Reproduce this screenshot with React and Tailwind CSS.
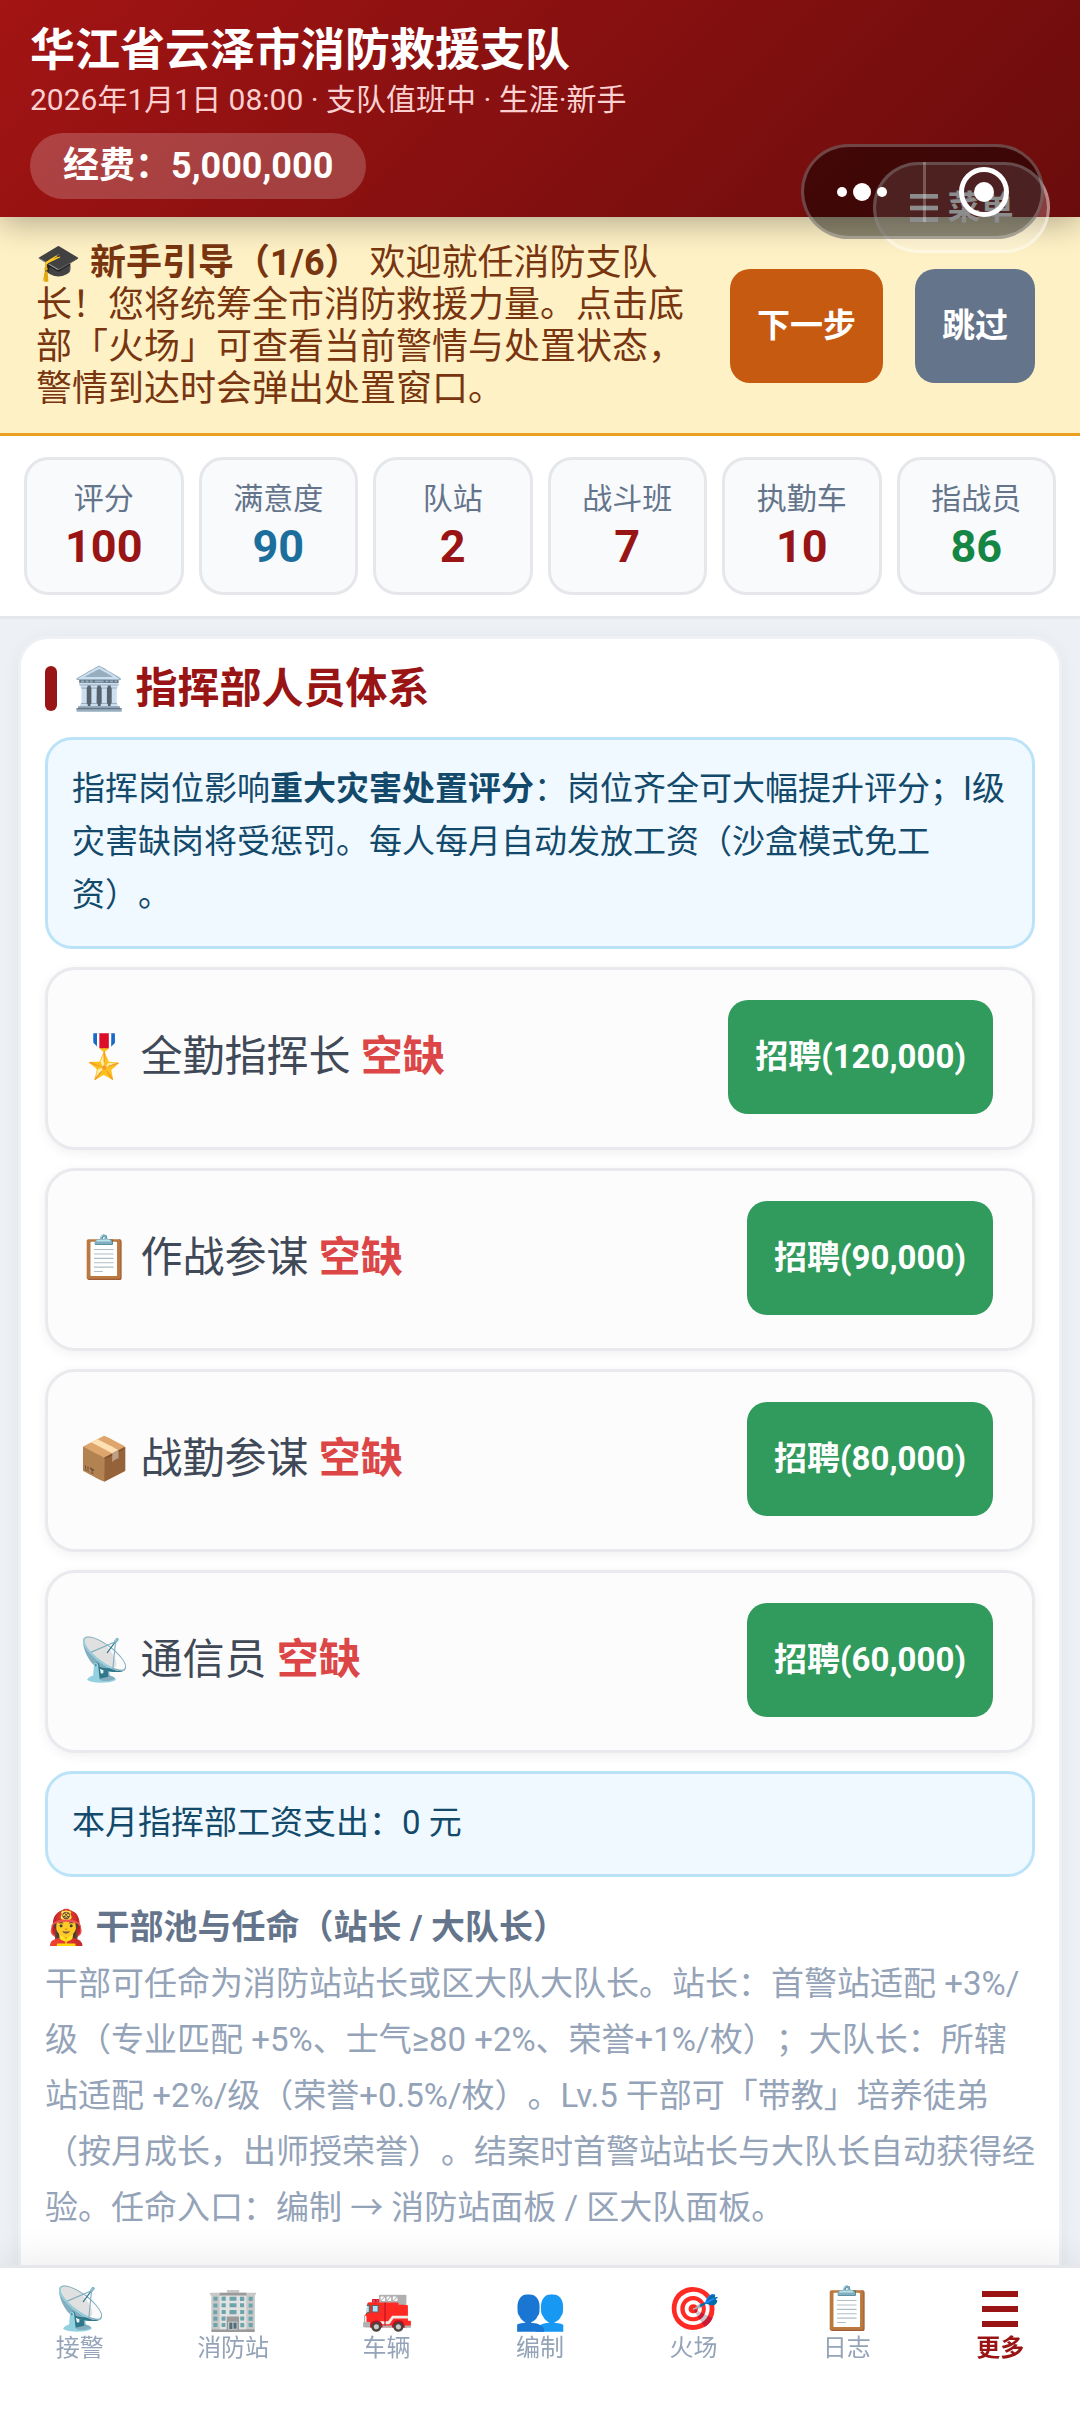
import { useState } from "react";
import clsx from "clsx";

const stats = [
  { label: "评分", value: "100", color: "text-[#991414]" },
  { label: "满意度", value: "90", color: "text-[#1c6e9c]" },
  { label: "队站", value: "2", color: "text-[#991414]" },
  { label: "战斗班", value: "7", color: "text-[#991414]" },
  { label: "执勤车", value: "10", color: "text-[#991414]" },
  { label: "指战员", value: "86", color: "text-[#158644]" },
];

const posts = [
  { icon: "🎖️", name: "全勤指挥长", cost: "120,000" },
  { icon: "📋", name: "作战参谋", cost: "90,000" },
  { icon: "📦", name: "战勤参谋", cost: "80,000" },
  { icon: "📡", name: "通信员", cost: "60,000" },
];

const tabs = [
  { icon: "📡", label: "接警" },
  { icon: "🏢", label: "消防站" },
  { icon: "🚒", label: "车辆" },
  { icon: "👥", label: "编制" },
  { icon: "🎯", label: "火场" },
  { icon: "📋", label: "日志" },
  { icon: null, label: "更多" },
];

const MenuBars = ({ className }) => (
  <svg viewBox="0 0 36 36" fill="currentColor" className={className} aria-hidden="true">
    <rect y="0" width="36" height="6" />
    <rect y="15" width="36" height="6" />
    <rect y="30" width="36" height="6" />
  </svg>
);

const ActionButton = ({ className, children, ...rest }) => (
  <button
    type="button"
    className={clsx(
      "h-[114px] shrink-0 whitespace-nowrap rounded-[20px] px-[27px] text-[33px] font-bold text-white",
      className
    )}
    {...rest}
  >
    {children}
  </button>
);

const InfoBox = ({ children }) => (
  <p className="rounded-[27px] border-3 border-[#bae3f8] bg-[#f0f9ff] px-6 pt-[22px] pb-[25px] text-[33px] leading-[53px] text-[#134a6b]">
    {children}
  </p>
);

// Mini program capsule, floats above the header menu button
const Capsule = () => (
  <div className="absolute top-36 right-9 flex h-[95px] w-[243px] items-center rounded-full border-3 border-white/25 bg-black/45">
    <button type="button" aria-label="更多操作" className="flex flex-1 items-center justify-center gap-1.5 pr-1">
      <span className="size-2.5 rounded-full bg-white" />
      <span className="size-[18px] rounded-full bg-white" />
      <span className="size-2.5 rounded-full bg-white" />
    </button>
    <span className="h-15 w-[3px] bg-white/25" />
    <button type="button" aria-label="关闭" className="flex flex-1 justify-center">
      <span className="flex size-[50px] items-center justify-center rounded-full border-5 border-white">
        <span className="size-5 rounded-full bg-white" />
      </span>
    </button>
  </div>
);

const Header = () => (
  <header className="relative z-10 bg-linear-135 from-[#a31414] to-[#6b0c0c] px-[30px] pt-[26px] pb-[18px] text-white shadow-[0_6px_30px_rgba(0,0,0,0.3)]">
    <h1 className="text-[45px] leading-[50px] font-bold">华江省云泽市消防救援支队</h1>
    <p className="text-[30px] leading-[48px] text-[#fbd0d0]">2026年1月1日 08:00 · 支队值班中 · 生涯·新手</p>
    <div className="mt-[9px] flex">
      <span className="rounded-full bg-white/20 px-[33px] text-[36px] leading-[66px] font-bold">经费：5,000,000</span>
    </div>
    <button
      type="button"
      className="absolute top-[162px] right-[30px] flex h-[91px] w-[177px] items-center justify-center gap-2.5 rounded-full border-3 border-white/40 bg-white/20 text-[33px] font-bold"
    >
      <MenuBars className="size-7" />
      菜单
    </button>
    <Capsule />
  </header>
);

const Guide = ({ onSkip }) => (
  <section className="flex items-center border-b-3 border-[#eca01f] bg-[#fef1c6] pt-[25px] pb-[23px] pr-[45px] pl-9">
    <p className="mr-8 flex-1 text-[36px] leading-[42px] text-[#78350f]">
      🎓 <strong>新手引导（1/6）</strong> 欢迎就任消防支队长！您将统筹全市消防救援力量。点击底部「火场」可查看当前警情与处置状态，警情到达时会弹出处置窗口。
    </p>
    <div className="flex gap-8">
      <ActionButton className="bg-[#c65a11]">下一步</ActionButton>
      <ActionButton className="bg-[#64748b]" onClick={onSkip}>跳过</ActionButton>
    </div>
  </section>
);

const StatBar = () => (
  <section className="grid grid-cols-6 gap-[15px] border-b-3 border-[#e5e7ea] bg-white px-6 py-[21px]">
    {stats.map((item) => (
      <div
        key={item.label}
        className="flex h-[138px] flex-col items-center rounded-[24px] border-3 border-[#e5e7eb] bg-[#f8fafc] pt-[18px]"
      >
        <span className="text-[30px] leading-[42px] text-[#64748b]">{item.label}</span>
        <span className={clsx("text-[45px] leading-[54px] font-bold", item.color)}>{item.value}</span>
      </div>
    ))}
  </section>
);

const TabBar = ({ active, onChange }) => (
  <nav className="fixed inset-x-0 bottom-0 z-10 flex h-[147px] border-t-3 border-[#e5e7eb] bg-white px-[3px] pt-[15px] shadow-[0_-6px_36px_rgba(0,0,0,0.08)]">
    {tabs.map((tab) => (
      <button
        key={tab.label}
        type="button"
        onClick={() => onChange(tab.label)}
        className={clsx(
          "flex flex-1 flex-col items-center",
          active === tab.label ? "font-bold text-[#991414]" : "text-[#94a3b8]"
        )}
      >
        <span className="flex h-[51px] items-center text-[42px] leading-[51px]">
          {tab.icon || <MenuBars className="size-9" />}
        </span>
        <span className="text-[24px] leading-[28px]">{tab.label}</span>
      </button>
    ))}
  </nav>
);

const App = () => {
  const [activeTab, setActiveTab] = useState("更多");
  const [showGuide, setShowGuide] = useState(true);

  return (
    <div className="flex min-h-screen flex-col bg-[#edf1f6] font-[Roboto,'Noto_Sans_CJK_SC',sans-serif] [text-spacing-trim:space-all]">
      <Header />
      {showGuide && <Guide onSkip={() => setShowGuide(false)} />}
      <StatBar />

      <main className="flex flex-1 flex-col px-[18px] pt-[17px]">
        <section className="flex-1 rounded-t-[30px] border-3 border-b-0 border-[#eef0f4] bg-white px-6 pt-[27px] pb-[160px] shadow-[0_3px_18px_rgba(0,0,0,0.05)]">
          <h2 className="flex items-center text-[42px] leading-[45px] font-bold text-[#991414]">
            <span className="mr-4 h-[45px] w-3 rounded-full bg-[#991414]" />
            🏛️ 指挥部人员体系
          </h2>

          <div className="mt-[26px] flex flex-col gap-[18px]">
            <InfoBox>
              指挥岗位影响<strong>重大灾害处置评分</strong>：岗位齐全可大幅提升评分；I级灾害缺岗将受惩罚。每人每月自动发放工资（沙盒模式免工资）。
            </InfoBox>

            {posts.map((post) => (
              <article
                key={post.name}
                className="flex h-[183px] items-center justify-between rounded-[30px] border-3 border-[#e8eaee] bg-[#fcfcfc] pr-[39px] pb-1 pl-[30px] shadow-[0_3px_12px_rgba(0,0,0,0.06)]"
              >
                <span className="text-[42px] leading-[60px] text-[#3f4957]">
                  {post.icon} {post.name} <strong className="text-[#dc4646]">空缺</strong>
                </span>
                <ActionButton className="bg-[#309b5c]">招聘({post.cost})</ActionButton>
              </article>
            ))}

            <InfoBox>本月指挥部工资支出：0 元</InfoBox>
          </div>

          <h3 className="mt-[26px] text-[34px] leading-[48px] font-bold text-[#64748b]">
            👩‍🚒 干部池与任命（站长 / 大队长）
          </h3>
          <p className="mt-[5px] text-[33px] leading-[56px] text-[#94a3b8]">
            干部可任命为消防站站长或区大队大队长。站长：首警站适配 +3%/级（专业匹配 +5%、士气≥80 +2%、荣誉+1%/枚）；大队长：所辖站适配 +2%/级（荣誉+0.5%/枚）。Lv.5 干部可「带教」培养徒弟（按月成长，出师授荣誉）。结案时首警站站长与大队长自动获得经验。任命入口：编制 → 消防站面板 / 区大队面板。
          </p>
        </section>
      </main>

      <TabBar active={activeTab} onChange={setActiveTab} />
    </div>
  );
};

export default App;
